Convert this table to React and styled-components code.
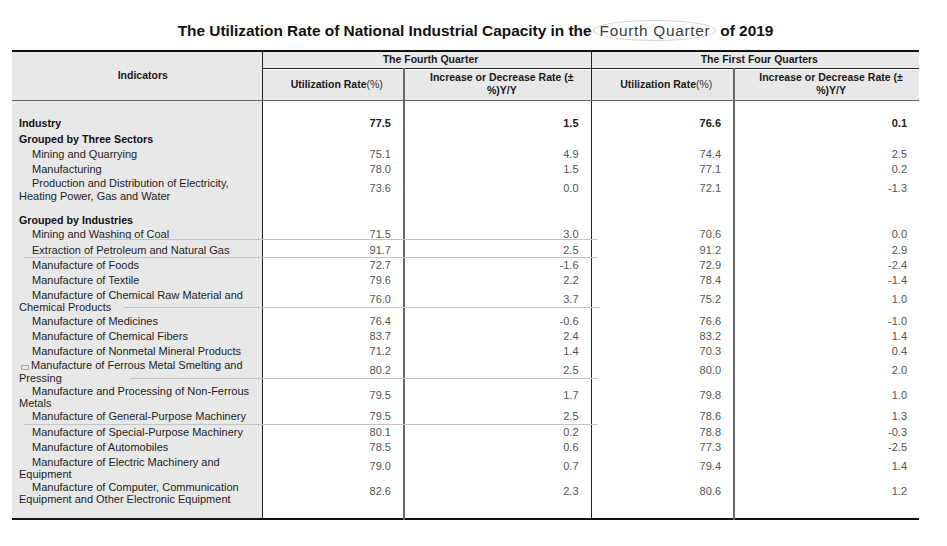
import React from 'react';
import styled, { createGlobalStyle } from 'styled-components';

const GlobalStyle = createGlobalStyle`
  html, body {
    margin: 0;
    padding: 0;
    background: #ffffff;
  }
  body {
    font-family: "Liberation Sans", Arial, sans-serif;
    color: #222;
  }
`;

const rows = [
  { kind: 'spacer', h: 15 },
  { kind: 'total', h: 16, label: ['Industry'], v: ['77.5', '1.5', '76.6', '0.1'] },
  { kind: 'group', h: 16, label: ['Grouped by Three Sectors'] },
  { kind: 'item', h: 15, label: ['Mining and Quarrying'], v: ['75.1', '4.9', '74.4', '2.5'] },
  { kind: 'item', h: 15, label: ['Manufacturing'], v: ['78.0', '1.5', '77.1', '0.2'] },
  { kind: 'item', h: 26, label: ['Production and Distribution of Electricity,', 'Heating Power, Gas and Water'], v: ['73.6', '0.0', '72.1', '-1.3'] },
  { kind: 'spacer', h: 10 },
  { kind: 'group', h: 14, label: ['Grouped by Industries'] },
  { kind: 'item', h: 15, label: ['Mining and Washing of Coal'], v: ['71.5', '3.0', '70.6', '0.0'] },
  { kind: 'item', h: 16, label: ['Extraction of Petroleum and Natural Gas'], v: ['91.7', '2.5', '91.2', '2.9'] },
  { kind: 'item', h: 15, label: ['Manufacture of Foods'], v: ['72.7', '-1.6', '72.9', '-2.4'] },
  { kind: 'item', h: 15, label: ['Manufacture of Textile'], v: ['79.6', '2.2', '78.4', '-1.4'] },
  { kind: 'item', h: 26, lh: 12, label: ['Manufacture of Chemical Raw Material and', 'Chemical Products'], v: ['76.0', '3.7', '75.2', '1.0'] },
  { kind: 'item', h: 15, label: ['Manufacture of Medicines'], v: ['76.4', '-0.6', '76.6', '-1.0'] },
  { kind: 'item', h: 15, label: ['Manufacture of Chemical Fibers'], v: ['83.7', '2.4', '83.2', '1.4'] },
  { kind: 'item', h: 15, label: ['Manufacture of Nonmetal Mineral Products'], v: ['71.2', '1.4', '70.3', '0.4'] },
  { kind: 'item', h: 26, mark: true, label: ['Manufacture of Ferrous Metal Smelting and', 'Pressing'], v: ['80.2', '2.5', '80.0', '2.0'] },
  { kind: 'item', h: 24, lh: 12, label: ['Manufacture and Processing of Non-Ferrous', 'Metals'], v: ['79.5', '1.7', '79.8', '1.0'] },
  { kind: 'item', h: 15, label: ['Manufacture of General-Purpose Machinery'], v: ['79.5', '2.5', '78.6', '1.3'] },
  { kind: 'item', h: 16, label: ['Manufacture of Special-Purpose Machinery'], v: ['80.1', '0.2', '78.8', '-0.3'] },
  { kind: 'item', h: 15, label: ['Manufacture of Automobiles'], v: ['78.5', '0.6', '77.3', '-2.5'] },
  { kind: 'item', h: 26, lh: 12, label: ['Manufacture of Electric Machinery and', 'Equipment'], v: ['79.0', '0.7', '79.4', '1.4'] },
  { kind: 'item', h: 24, lh: 12, label: ['Manufacture of Computer, Communication', 'Equipment and Other Electronic Equipment'], v: ['82.6', '2.3', '80.6', '1.2'] },
  { kind: 'spacer', h: 14 },
];

// faint leftover rules from the source image
const strays = [
  { top: 189, left: 100, width: 498 },
  { top: 207, left: 24, width: 574 },
  { top: 257, left: 124, width: 476 },
  { top: 328, left: 130, width: 468 },
  { top: 374, left: 24, width: 574 },
];

const dividers = ['gray', 'dark', 'gray', ''];

const App = () => {
  return (
    <>
      <GlobalStyle />
      <Page>
        <Title>
          The Utilization Rate of National Industrial Capacity in the<Circled>Fourth Quarter</Circled>of 2019
        </Title>
        <TableWrap>
          <Table>
            <colgroup>
              <col style={{ width: 250 }} />
              <col style={{ width: 142 }} />
              <col style={{ width: 187 }} />
              <col style={{ width: 143 }} />
              <col style={{ width: 185 }} />
            </colgroup>
            <thead>
              <HeadRow $h={17}>
                <HeadCell rowSpan={2} $divider="dark" $bottom $shift={12}>Indicators</HeadCell>
                <HeadCell colSpan={2} $divider="dark">The Fourth Quarter</HeadCell>
                <HeadCell colSpan={2}>The First Four Quarters</HeadCell>
              </HeadRow>
              <HeadRow $h={32}>
                <HeadCell $divider="gray" $bottom $top>Utilization Rate<Unit>(%)</Unit></HeadCell>
                <HeadCell $divider="dark" $bottom $top>Increase or Decrease Rate (±<br />%)Y/Y</HeadCell>
                <HeadCell $divider="gray" $bottom $top>Utilization Rate<Unit>(%)</Unit></HeadCell>
                <HeadCell $bottom $top>Increase or Decrease Rate (±<br />%)Y/Y</HeadCell>
              </HeadRow>
            </thead>
            <tbody>
              {rows.map((row, i) => (
                <Row key={i} $h={row.h}>
                  <LabelCell $kind={row.kind} $lh={row.lh || 13}>
                    {row.label && row.label.map((line, j) => (
                      <React.Fragment key={j}>
                        {j === 0 && row.mark && <Mark />}
                        {j > 0 && <br />}
                        {line}
                      </React.Fragment>
                    ))}
                  </LabelCell>
                  {dividers.map((d, k) => (
                    <NumCell
                      key={k}
                      $divider={d}
                      $bold={row.kind === 'total'}
                      $lift={row.label && row.label.length > 1}
                    >
                      {row.v ? row.v[k] : ''}
                    </NumCell>
                  ))}
                </Row>
              ))}
            </tbody>
          </Table>
          {strays.map((s, i) => (
            <StrayLine key={i} $top={s.top} $left={s.left} $width={s.width} />
          ))}
        </TableWrap>
      </Page>
    </>
  );
};

const Page = styled.div`
  width: 947px;
  height: 546px;
  padding-top: 20px;
  box-sizing: border-box;
`;

const Title = styled.h1`
  margin: 0 0 10px;
  height: 20px;
  text-align: center;
  font-size: 15.4px;
  line-height: 20px;
  font-weight: 700;
  color: #111;
  padding-left: 4px;
  white-space: nowrap;
`;

const Circled = styled.span`
  display: inline-block;
  font-weight: 400;
  color: #3c3c3c;
  letter-spacing: 0.7px;
  margin: 0 4px 0 1px;
  padding: 0 5px 0 6px;
  line-height: 19px;
  border: 1px solid #d2d2d2;
  border-radius: 50%;
`;

const TableWrap = styled.div`
  position: relative;
  margin-left: 12px;
  width: 907px;
`;

const Table = styled.table`
  width: 907px;
  table-layout: fixed;
  border-collapse: collapse;
  border-top: 2px solid #111;
  border-bottom: 2px solid #111;
  font-size: 11px;
`;

const dividerColor = (d) => {
  if (d === 'dark') return '1px solid #222';
  if (d === 'gray') return '2px solid #666';
  return 'none';
};

const HeadRow = styled.tr`
  height: ${(p) => p.$h}px;
`;

const HeadCell = styled.th`
  background: #e8e8e8;
  font-size: 10.5px;
  font-weight: 700;
  color: #1a1a1a;
  line-height: 13px;
  padding: 0 0 0 ${(p) => p.$shift || 8}px;
  text-align: center;
  vertical-align: middle;
  border-right: ${(p) => dividerColor(p.$divider)};
  border-bottom: ${(p) => (p.$bottom ? '1px solid #666' : '1px solid #222')};
  box-shadow: ${(p) => (p.$top ? 'inset 0 1px 0 #fff' : 'none')};
`;

const Unit = styled.span`
  font-weight: 400;
  color: #333;
`;

const Row = styled.tr`
  height: ${(p) => p.$h}px;
`;

const LabelCell = styled.td`
  background: #e8e8e8;
  border-right: 1px solid #222;
  padding: 0 0 0 7px;
  text-indent: ${(p) => (p.$kind === 'item' ? 13 : 0)}px;
  font-size: ${(p) => (p.$kind === 'item' ? 11 : 10.7)}px;
  font-weight: ${(p) => (p.$kind === 'item' ? 400 : 700)};
  color: ${(p) => (p.$kind === 'item' ? '#1e1e1e' : '#111')};
  line-height: ${(p) => p.$lh}px;
  vertical-align: middle;
  white-space: nowrap;
  overflow: hidden;
`;

const Mark = styled.span`
  display: inline-block;
  width: 6px;
  height: 3px;
  border: 1px solid #aaa;
  margin-left: -11px;
  margin-right: 2px;
  vertical-align: -1px;
  text-indent: 0;
`;

const NumCell = styled.td`
  text-align: right;
  padding: 0 12px ${(p) => (p.$lift ? 3 : 0)}px 0;
  font-size: 11px;
  line-height: 13px;
  font-weight: ${(p) => (p.$bold ? 700 : 400)};
  color: ${(p) => (p.$bold ? '#222' : '#555')};
  vertical-align: middle;
  border-right: ${(p) => dividerColor(p.$divider)};
`;

const StrayLine = styled.div`
  position: absolute;
  top: ${(p) => p.$top}px;
  left: ${(p) => p.$left - 12}px;
  width: ${(p) => p.$width}px;
  height: 1px;
  background: #c4c4c4;
  pointer-events: none;
`;

export default App;
